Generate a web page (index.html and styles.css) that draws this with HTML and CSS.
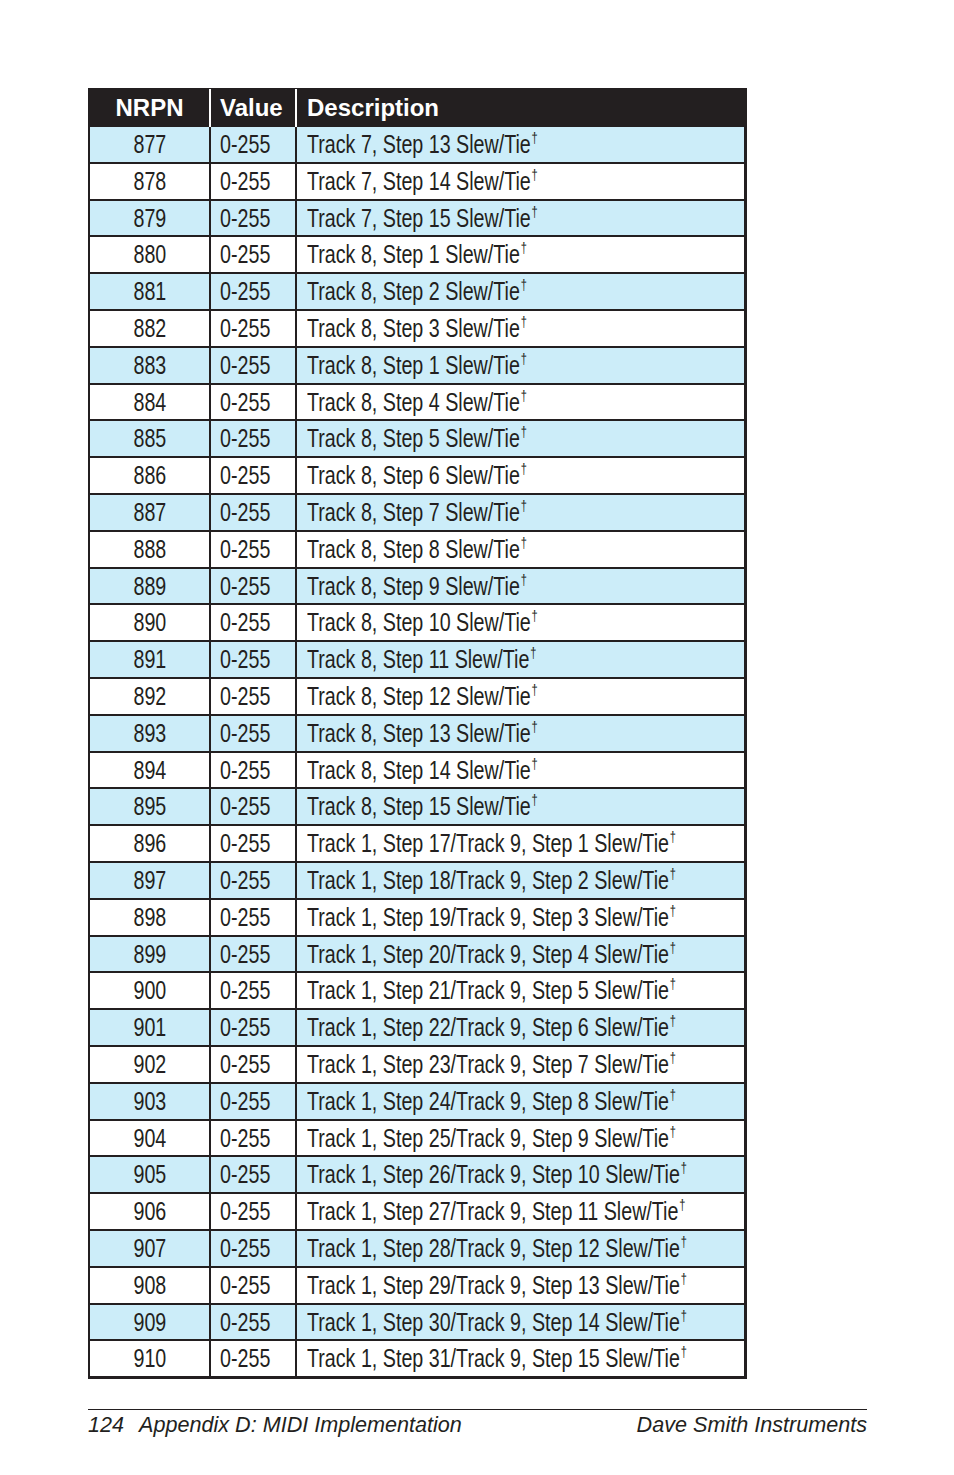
FILE: index.html
```html
<!DOCTYPE html>
<html>
<head>
<meta charset="utf-8">
<link rel="stylesheet" href="styles.css">
</head>
<body>
<div class="page">
  <div class="tbl">
    <div class="row head">
      <div class="c c1">NRPN</div>
      <div class="c c2">Value</div>
      <div class="c c3">Description</div>
    </div>
    <div class="row blue"><div class="c c1"><span class="t">877</span></div><div class="c c2"><span class="t">0-255</span></div><div class="c c3"><span class="t">Track 7, Step 13 Slew/Tie<sup class="dg">†</sup></span></div></div>
    <div class="row"><div class="c c1"><span class="t">878</span></div><div class="c c2"><span class="t">0-255</span></div><div class="c c3"><span class="t">Track 7, Step 14 Slew/Tie<sup class="dg">†</sup></span></div></div>
    <div class="row blue"><div class="c c1"><span class="t">879</span></div><div class="c c2"><span class="t">0-255</span></div><div class="c c3"><span class="t">Track 7, Step 15 Slew/Tie<sup class="dg">†</sup></span></div></div>
    <div class="row"><div class="c c1"><span class="t">880</span></div><div class="c c2"><span class="t">0-255</span></div><div class="c c3"><span class="t">Track 8, Step 1 Slew/Tie<sup class="dg">†</sup></span></div></div>
    <div class="row blue"><div class="c c1"><span class="t">881</span></div><div class="c c2"><span class="t">0-255</span></div><div class="c c3"><span class="t">Track 8, Step 2 Slew/Tie<sup class="dg">†</sup></span></div></div>
    <div class="row"><div class="c c1"><span class="t">882</span></div><div class="c c2"><span class="t">0-255</span></div><div class="c c3"><span class="t">Track 8, Step 3 Slew/Tie<sup class="dg">†</sup></span></div></div>
    <div class="row blue"><div class="c c1"><span class="t">883</span></div><div class="c c2"><span class="t">0-255</span></div><div class="c c3"><span class="t">Track 8, Step 1 Slew/Tie<sup class="dg">†</sup></span></div></div>
    <div class="row"><div class="c c1"><span class="t">884</span></div><div class="c c2"><span class="t">0-255</span></div><div class="c c3"><span class="t">Track 8, Step 4 Slew/Tie<sup class="dg">†</sup></span></div></div>
    <div class="row blue"><div class="c c1"><span class="t">885</span></div><div class="c c2"><span class="t">0-255</span></div><div class="c c3"><span class="t">Track 8, Step 5 Slew/Tie<sup class="dg">†</sup></span></div></div>
    <div class="row"><div class="c c1"><span class="t">886</span></div><div class="c c2"><span class="t">0-255</span></div><div class="c c3"><span class="t">Track 8, Step 6 Slew/Tie<sup class="dg">†</sup></span></div></div>
    <div class="row blue"><div class="c c1"><span class="t">887</span></div><div class="c c2"><span class="t">0-255</span></div><div class="c c3"><span class="t">Track 8, Step 7 Slew/Tie<sup class="dg">†</sup></span></div></div>
    <div class="row"><div class="c c1"><span class="t">888</span></div><div class="c c2"><span class="t">0-255</span></div><div class="c c3"><span class="t">Track 8, Step 8 Slew/Tie<sup class="dg">†</sup></span></div></div>
    <div class="row blue"><div class="c c1"><span class="t">889</span></div><div class="c c2"><span class="t">0-255</span></div><div class="c c3"><span class="t">Track 8, Step 9 Slew/Tie<sup class="dg">†</sup></span></div></div>
    <div class="row"><div class="c c1"><span class="t">890</span></div><div class="c c2"><span class="t">0-255</span></div><div class="c c3"><span class="t">Track 8, Step 10 Slew/Tie<sup class="dg">†</sup></span></div></div>
    <div class="row blue"><div class="c c1"><span class="t">891</span></div><div class="c c2"><span class="t">0-255</span></div><div class="c c3"><span class="t">Track 8, Step 11 Slew/Tie<sup class="dg">†</sup></span></div></div>
    <div class="row"><div class="c c1"><span class="t">892</span></div><div class="c c2"><span class="t">0-255</span></div><div class="c c3"><span class="t">Track 8, Step 12 Slew/Tie<sup class="dg">†</sup></span></div></div>
    <div class="row blue"><div class="c c1"><span class="t">893</span></div><div class="c c2"><span class="t">0-255</span></div><div class="c c3"><span class="t">Track 8, Step 13 Slew/Tie<sup class="dg">†</sup></span></div></div>
    <div class="row"><div class="c c1"><span class="t">894</span></div><div class="c c2"><span class="t">0-255</span></div><div class="c c3"><span class="t">Track 8, Step 14 Slew/Tie<sup class="dg">†</sup></span></div></div>
    <div class="row blue"><div class="c c1"><span class="t">895</span></div><div class="c c2"><span class="t">0-255</span></div><div class="c c3"><span class="t">Track 8, Step 15 Slew/Tie<sup class="dg">†</sup></span></div></div>
    <div class="row"><div class="c c1"><span class="t">896</span></div><div class="c c2"><span class="t">0-255</span></div><div class="c c3"><span class="t">Track 1, Step 17/Track 9, Step 1 Slew/Tie<sup class="dg">†</sup></span></div></div>
    <div class="row blue"><div class="c c1"><span class="t">897</span></div><div class="c c2"><span class="t">0-255</span></div><div class="c c3"><span class="t">Track 1, Step 18/Track 9, Step 2 Slew/Tie<sup class="dg">†</sup></span></div></div>
    <div class="row"><div class="c c1"><span class="t">898</span></div><div class="c c2"><span class="t">0-255</span></div><div class="c c3"><span class="t">Track 1, Step 19/Track 9, Step 3 Slew/Tie<sup class="dg">†</sup></span></div></div>
    <div class="row blue"><div class="c c1"><span class="t">899</span></div><div class="c c2"><span class="t">0-255</span></div><div class="c c3"><span class="t">Track 1, Step 20/Track 9, Step 4 Slew/Tie<sup class="dg">†</sup></span></div></div>
    <div class="row"><div class="c c1"><span class="t">900</span></div><div class="c c2"><span class="t">0-255</span></div><div class="c c3"><span class="t">Track 1, Step 21/Track 9, Step 5 Slew/Tie<sup class="dg">†</sup></span></div></div>
    <div class="row blue"><div class="c c1"><span class="t">901</span></div><div class="c c2"><span class="t">0-255</span></div><div class="c c3"><span class="t">Track 1, Step 22/Track 9, Step 6 Slew/Tie<sup class="dg">†</sup></span></div></div>
    <div class="row"><div class="c c1"><span class="t">902</span></div><div class="c c2"><span class="t">0-255</span></div><div class="c c3"><span class="t">Track 1, Step 23/Track 9, Step 7 Slew/Tie<sup class="dg">†</sup></span></div></div>
    <div class="row blue"><div class="c c1"><span class="t">903</span></div><div class="c c2"><span class="t">0-255</span></div><div class="c c3"><span class="t">Track 1, Step 24/Track 9, Step 8 Slew/Tie<sup class="dg">†</sup></span></div></div>
    <div class="row"><div class="c c1"><span class="t">904</span></div><div class="c c2"><span class="t">0-255</span></div><div class="c c3"><span class="t">Track 1, Step 25/Track 9, Step 9 Slew/Tie<sup class="dg">†</sup></span></div></div>
    <div class="row blue"><div class="c c1"><span class="t">905</span></div><div class="c c2"><span class="t">0-255</span></div><div class="c c3"><span class="t">Track 1, Step 26/Track 9, Step 10 Slew/Tie<sup class="dg">†</sup></span></div></div>
    <div class="row"><div class="c c1"><span class="t">906</span></div><div class="c c2"><span class="t">0-255</span></div><div class="c c3"><span class="t">Track 1, Step 27/Track 9, Step 11 Slew/Tie<sup class="dg">†</sup></span></div></div>
    <div class="row blue"><div class="c c1"><span class="t">907</span></div><div class="c c2"><span class="t">0-255</span></div><div class="c c3"><span class="t">Track 1, Step 28/Track 9, Step 12 Slew/Tie<sup class="dg">†</sup></span></div></div>
    <div class="row"><div class="c c1"><span class="t">908</span></div><div class="c c2"><span class="t">0-255</span></div><div class="c c3"><span class="t">Track 1, Step 29/Track 9, Step 13 Slew/Tie<sup class="dg">†</sup></span></div></div>
    <div class="row blue"><div class="c c1"><span class="t">909</span></div><div class="c c2"><span class="t">0-255</span></div><div class="c c3"><span class="t">Track 1, Step 30/Track 9, Step 14 Slew/Tie<sup class="dg">†</sup></span></div></div>
    <div class="row last"><div class="c c1"><span class="t">910</span></div><div class="c c2"><span class="t">0-255</span></div><div class="c c3"><span class="t">Track 1, Step 31/Track 9, Step 15 Slew/Tie<sup class="dg">†</sup></span></div></div>
  </div>
  <div class="footer">
    <div class="fl"><span class="pg">124</span><span>Appendix D: MIDI Implementation</span></div>
    <div class="fr">Dave Smith Instruments</div>
  </div>
</div>
</body>
</html>
```

FILE: styles.css
```css
html, body {
  margin: 0;
  padding: 0;
  background: #ffffff;
}

.page {
  padding: 88px 0 0 88px;
  color: #231f20;
}

.tbl {
  width: 659px;
  box-sizing: border-box;
  border-left: 2px solid #231f20;
  border-right: 3px solid #231f20;
  border-bottom: 1px solid #231f20;
  background: #ffffff;
}

.row {
  display: grid;
  grid-template-columns: 121px 86px 1fr;
  height: 36.8px;
  box-sizing: border-box;
  border-bottom: 2px solid #231f20;
  font-family: "Liberation Sans", Arial, sans-serif;
  font-size: 25px;
  line-height: 34px;
}

.row.blue {
  background: #ccedf9;
}

.c {
  box-sizing: border-box;
  border-right: 2px solid #231f20;
  white-space: nowrap;
  overflow: visible;
}

.t {
  display: inline-block;
  transform: scaleX(0.787);
  transform-origin: 0 50%;
}

.c1 {
  text-align: center;
}

.c1 .t {
  transform-origin: 50% 50%;
}

.c2 {
  padding-left: 9px;
}

.c3 {
  border-right: none;
  padding-left: 10px;
}

.dg {
  font-size: 14px;
  line-height: 0;
  vertical-align: 10px;
  margin-left: 1px;
}

.row.head {
  height: 39px;
  background: #231f20;
  color: #ffffff;
  border-bottom: none;
  font-weight: bold;
  font-size: 24px;
  line-height: 39px;
}

.row.head .c {
  border-right-color: #ffffff;
  border-image: linear-gradient(to bottom, transparent 0, transparent 2px, #ffffff 2px, #ffffff 100%) 1;
}

.row.head .c3 {
  border-right: none;
  border-image: none;
}

.footer {
  width: 779px;
  margin-top: 30px;
  border-top: 1px solid #231f20;
  padding-top: 3px;
  display: flex;
  justify-content: space-between;
  font-family: "Liberation Sans", Arial, sans-serif;
  font-style: italic;
  font-size: 21.6px;
  line-height: 24px;
  color: #231f20;
}

.pg {
  margin-right: 15px;
}
```
